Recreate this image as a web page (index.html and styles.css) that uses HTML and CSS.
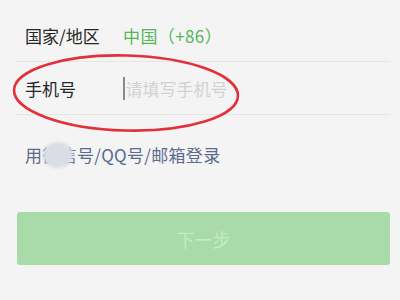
FILE: index.html
```html
<!DOCTYPE html>
<html lang="zh">
<head>
<meta charset="utf-8">
<link rel="stylesheet" href="styles.css">
</head>
<body>
<div class="page">
  <div class="form">
    <div class="row">
      <span class="label">国家/地区</span>
      <span class="value">中国（+86）</span>
    </div>
    <div class="row">
      <span class="label">手机号</span>
      <span class="input"><span class="cursor"></span><span class="placeholder">请填写手机号</span></span>
    </div>
  </div>
  <div class="alt">
    <span class="alt-text">用微信号/QQ号/邮箱登录</span>
    <span class="blur"></span>
  </div>
  <div class="btn">下一步</div>
  <svg class="circle" width="400" height="300" viewBox="0 0 400 300">
    <ellipse cx="126" cy="93" rx="112" ry="37.5" transform="rotate(1.5 126 93)" fill="none" stroke="#e2313b" stroke-width="2.6"/>
  </svg>
</div>
</body>
</html>
```

FILE: styles.css
```css
html, body {
  margin: 0;
  padding: 0;
  background: #f4f4f4;
}
body {
  width: 400px;
  height: 300px;
  overflow: hidden;
  font-family: "Noto Sans CJK SC", "Noto Sans", sans-serif;
}
.page {
  position: relative;
  width: 400px;
  height: 300px;
}
.form {
  margin: 0 10px 0 15px;
  padding-top: 9px;
}
.row {
  display: flex;
  align-items: center;
  height: 52px;
  border-bottom: 1px solid #e6e6e6;
  padding-left: 10px;
}
.label {
  width: 98px;
  font-size: 17px;
  color: #262626;
}
.value {
  font-size: 17px;
  color: #55b65a;
  letter-spacing: 0.4px;
}
.input {
  display: flex;
  align-items: center;
}
.cursor {
  width: 1.5px;
  height: 23px;
  background: #8a8a8a;
  margin-right: 1px;
}
.placeholder {
  font-size: 17px;
  color: #d2d2d2;
}
.alt {
  position: relative;
  margin: 24px 0 0 25px;
  height: 30px;
  display: flex;
  align-items: center;
}
.alt-text {
  font-size: 17px;
  color: #5b6a8e;
  letter-spacing: 0.3px;
}
.blur {
  position: absolute;
  left: 18px;
  top: 3px;
  width: 30px;
  height: 26px;
  border-radius: 50%;
  background: #dadde6;
  filter: blur(1.5px);
}
.btn {
  margin: 43px 10px 0 17px;
  height: 53px;
  border-radius: 3px;
  background: #a8dba8;
  color: #c7ebc7;
  font-size: 18px;
  display: flex;
  align-items: center;
  justify-content: center;
}
.circle {
  position: absolute;
  left: 0;
  top: 0;
  pointer-events: none;
}
```
